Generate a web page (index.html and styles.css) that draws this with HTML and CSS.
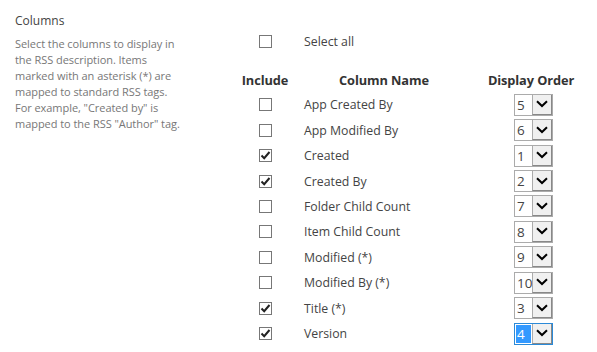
FILE: index.html
```html
<!DOCTYPE html>
<html>
<head>
<meta charset="utf-8">
<link rel="stylesheet" href="styles.css">
</head>
<body>
<div class="page">
  <div class="intro">
    <div class="title">Columns</div>
    <div class="desc">Select the columns to display in<br>the RSS description. Items<br>marked with an asterisk (*) are<br>mapped to standard RSS tags.<br>For example, "Created by" is<br>mapped to the RSS "Author" tag.</div>
  </div>
  <div class="grid">
    <div class="cell inc"><span class="cb"></span></div>
    <div class="cell name">Select all</div>
    <div class="cell ord"></div>

    <div class="cell inc head">Include</div>
    <div class="cell name head center">Column Name</div>
    <div class="cell ord head center">Display Order</div>

    <div class="cell inc"><span class="cb"></span></div>
    <div class="cell name">App Created By</div>
    <div class="cell ord"><span class="sel"><span class="val">5</span><span class="btn"><svg viewBox="0 0 12 8" width="12" height="8"><path d="M1 1.2 L6 6 L11 1.2" fill="none" stroke="#000" stroke-width="2"/></svg></span></span></div>

    <div class="cell inc"><span class="cb"></span></div>
    <div class="cell name">App Modified By</div>
    <div class="cell ord"><span class="sel"><span class="val">6</span><span class="btn"><svg viewBox="0 0 12 8" width="12" height="8"><path d="M1 1.2 L6 6 L11 1.2" fill="none" stroke="#000" stroke-width="2"/></svg></span></span></div>

    <div class="cell inc"><span class="cb on"><svg viewBox="0 0 13 13" width="13" height="13"><path d="M2.5 6.5 L5.2 9.2 L10.5 3" fill="none" stroke="#222" stroke-width="2"/></svg></span></div>
    <div class="cell name">Created</div>
    <div class="cell ord"><span class="sel"><span class="val">1</span><span class="btn"><svg viewBox="0 0 12 8" width="12" height="8"><path d="M1 1.2 L6 6 L11 1.2" fill="none" stroke="#000" stroke-width="2"/></svg></span></span></div>

    <div class="cell inc"><span class="cb on"><svg viewBox="0 0 13 13" width="13" height="13"><path d="M2.5 6.5 L5.2 9.2 L10.5 3" fill="none" stroke="#222" stroke-width="2"/></svg></span></div>
    <div class="cell name">Created By</div>
    <div class="cell ord"><span class="sel"><span class="val">2</span><span class="btn"><svg viewBox="0 0 12 8" width="12" height="8"><path d="M1 1.2 L6 6 L11 1.2" fill="none" stroke="#000" stroke-width="2"/></svg></span></span></div>

    <div class="cell inc"><span class="cb"></span></div>
    <div class="cell name">Folder Child Count</div>
    <div class="cell ord"><span class="sel"><span class="val">7</span><span class="btn"><svg viewBox="0 0 12 8" width="12" height="8"><path d="M1 1.2 L6 6 L11 1.2" fill="none" stroke="#000" stroke-width="2"/></svg></span></span></div>

    <div class="cell inc"><span class="cb"></span></div>
    <div class="cell name">Item Child Count</div>
    <div class="cell ord"><span class="sel"><span class="val">8</span><span class="btn"><svg viewBox="0 0 12 8" width="12" height="8"><path d="M1 1.2 L6 6 L11 1.2" fill="none" stroke="#000" stroke-width="2"/></svg></span></span></div>

    <div class="cell inc"><span class="cb"></span></div>
    <div class="cell name">Modified (*)</div>
    <div class="cell ord"><span class="sel"><span class="val">9</span><span class="btn"><svg viewBox="0 0 12 8" width="12" height="8"><path d="M1 1.2 L6 6 L11 1.2" fill="none" stroke="#000" stroke-width="2"/></svg></span></span></div>

    <div class="cell inc"><span class="cb"></span></div>
    <div class="cell name">Modified By (*)</div>
    <div class="cell ord"><span class="sel"><span class="val">10</span><span class="btn"><svg viewBox="0 0 12 8" width="12" height="8"><path d="M1 1.2 L6 6 L11 1.2" fill="none" stroke="#000" stroke-width="2"/></svg></span></span></div>

    <div class="cell inc"><span class="cb on"><svg viewBox="0 0 13 13" width="13" height="13"><path d="M2.5 6.5 L5.2 9.2 L10.5 3" fill="none" stroke="#222" stroke-width="2"/></svg></span></div>
    <div class="cell name">Title (*)</div>
    <div class="cell ord"><span class="sel"><span class="val">3</span><span class="btn"><svg viewBox="0 0 12 8" width="12" height="8"><path d="M1 1.2 L6 6 L11 1.2" fill="none" stroke="#000" stroke-width="2"/></svg></span></span></div>

    <div class="cell inc"><span class="cb on"><svg viewBox="0 0 13 13" width="13" height="13"><path d="M2.5 6.5 L5.2 9.2 L10.5 3" fill="none" stroke="#222" stroke-width="2"/></svg></span></div>
    <div class="cell name">Version</div>
    <div class="cell ord"><span class="sel focus"><span class="val">4</span><span class="btn"><svg viewBox="0 0 12 8" width="12" height="8"><path d="M1 1.2 L6 6 L11 1.2" fill="none" stroke="#000" stroke-width="2"/></svg></span></span></div>
  </div>
</div>
</body>
</html>
```

FILE: styles.css
```css
html, body {
  margin: 0;
  padding: 0;
  background: #fff;
}
body {
  font-family: "Open Sans", "Noto Sans", sans-serif;
  color: #444;
}
.page {
  display: flex;
  align-items: flex-start;
}
.intro {
  width: 170px;
  padding: 12px 0 0 15px;
  margin-right: 55px;
}
.title {
  font-size: 12px;
  line-height: 18px;
  color: #444;
  margin-bottom: 6px;
}
.desc {
  font-size: 11px;
  line-height: 16px;
  color: #777;
  letter-spacing: -0.05px;
  white-space: nowrap;
}
.grid {
  display: grid;
  grid-template-columns: 50px 188px 106px;
  grid-template-rows: 26px 38px repeat(10, 25.44px);
  padding-top: 28px;
}
.cell {
  display: flex;
  align-items: center;
  font-size: 12.3px;
  color: #444;
}
.inc {
  justify-content: center;
}
.name {
  padding-left: 14px;
}
.ord {
  padding-left: 36px;
}
.head {
  align-items: flex-end;
  padding-bottom: 3px;
  font-weight: 700;
  font-size: 12.8px;
  color: #333;
  letter-spacing: -0.1px;
}
.center {
  justify-content: center;
  padding-left: 0;
}
.cb {
  width: 11px;
  height: 11px;
  border: 1px solid #777;
  background: #fff;
  display: block;
  position: relative;
  margin-left: 1px;
}
.cb svg {
  position: absolute;
  left: -1px;
  top: -1px;
}
.sel {
  display: flex;
  width: 39px;
  height: 22px;
  box-sizing: border-box;
  border: 1px solid #ababab;
  background: #fff;
}
.val {
  flex: 1;
  display: flex;
  align-items: center;
  padding-left: 2px;
  font-size: 13.5px;
  color: #444;
}
.btn {
  width: 20px;
  box-sizing: border-box;
  background: #f0f0f0;
  border-left: 1px solid #ababab;
  border-right: 1px solid #888;
  border-bottom: 1px solid #888;
  display: flex;
  align-items: center;
  justify-content: center;
}
.sel.focus {
  border-color: #2b8ad8;
}
.sel.focus .val {
  background: #3399ff;
  color: #fff;
  margin: 1px;
  padding-left: 1px;
}
```
